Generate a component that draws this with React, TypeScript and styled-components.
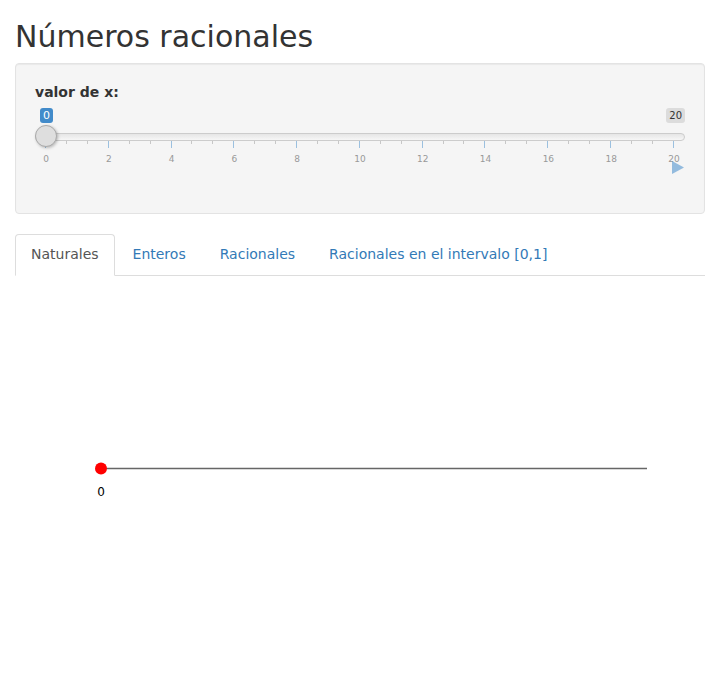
import React from "react";
import styled, { createGlobalStyle } from "styled-components";

const Global = createGlobalStyle`
  * { box-sizing: border-box; }
  html, body { margin: 0; padding: 0; background: #fff; }
  body {
    font-family: "DejaVu Sans", sans-serif;
    font-size: 14px;
    line-height: 1.42857;
    color: #333;
  }
`;

const Page = styled.div`
  padding: 0 15px;
`;

const Title = styled.h2`
  margin: 20px 0 10px;
  font-size: 30px;
  font-weight: 500;
  line-height: 1.1;
  color: #333;
`;

const Well = styled.div`
  background: #f5f5f5;
  border: 1px solid #e3e3e3;
  border-radius: 4px;
  box-shadow: inset 0 1px 1px rgba(0, 0, 0, 0.05);
  padding: 19px;
  margin-bottom: 20px;
`;

const FormGroup = styled.div`
  margin-bottom: 15px;
`;

const Label = styled.label`
  display: inline-block;
  font-weight: bold;
  margin-bottom: 5px;
  line-height: 19px;
  height: 20px;
`;

const Irs = styled.div`
  display: flex;
  flex-direction: column;
  height: 55px;
  & > * { flex-shrink: 0; }
`;

const TagRow = styled.div`
  display: flex;
  justify-content: space-between;
  align-items: flex-start;
  height: 15px;
  padding-left: 5px;
`;

const Tag = styled.span<{ $single?: boolean }>`
  padding: 1px 3px;
  font-size: ${(p) => (p.$single ? "11px" : "10px")};
  line-height: 13px;
  border-radius: 3px;
  color: ${(p) => (p.$single ? "#fff" : "#333")};
  background: ${(p) => (p.$single ? "#428bca" : "rgba(0,0,0,0.1)")};
`;

const Track = styled.div`
  position: relative;
  margin-top: 2px;
  height: 22px;
  padding-top: 8px;
  z-index: 1;
`;

const Line = styled.div`
  height: 8px;
  border: 1px solid #ccc;
  border-radius: 16px;
  background: linear-gradient(to bottom, #ddd -50%, #fff 150%);
`;

const Handle = styled.div`
  position: absolute;
  top: 0;
  left: 0;
  width: 22px;
  height: 22px;
  border: 1px solid #aaa;
  border-radius: 27px;
  background: #dedede;
  box-shadow: 1px 1px 3px rgba(0, 0, 0, 0.25);
`;

const TickRow = styled.div`
  display: flex;
  justify-content: space-between;
  align-items: flex-start;
  margin-top: -7px;
  height: 8px;
  padding: 0 11px 0 10px;
`;

const Tick = styled.span<{ $major?: boolean }>`
  width: 1px;
  height: ${(p) => (p.$major ? "8px" : "4px")};
  background: ${(p) => (p.$major ? "#428bca" : "#999")};
  opacity: 0.5;
`;

const LabelRow = styled.div`
  display: flex;
  justify-content: space-between;
  margin: 5px -4px 0;
`;

const GridText = styled.span`
  width: 30px;
  text-align: center;
  font-size: 9px;
  line-height: 12px;
  color: #999;
`;

const Animate = styled.div`
  display: flex;
  justify-content: flex-end;
  align-items: flex-start;
  margin-top: -9px;
  height: 25px;
  padding-top: 7px;
  padding-right: 1px;
`;

const Tabs = styled.ul`
  display: flex;
  list-style: none;
  margin: 0;
  padding: 0;
  border-bottom: 1px solid #ddd;
`;

const TabItem = styled.li`
  margin-right: 2px;
  margin-bottom: -1px;
`;

const TabLink = styled.a<{ $active?: boolean }>`
  display: block;
  padding: 9px 15px 11px;
  line-height: 20px;
  border: 1px solid ${(p) => (p.$active ? "#ddd" : "transparent")};
  border-bottom-color: transparent;
  border-radius: 4px 4px 0 0;
  background: ${(p) => (p.$active ? "#fff" : "transparent")};
  color: ${(p) => (p.$active ? "#555" : "#337ab7")};
  text-decoration: none;
  cursor: pointer;
`;

const Plot = styled.div`
  height: 400px;
`;

const majors = [0, 2, 4, 6, 8, 10, 12, 14, 16, 18, 20];
const ticks: boolean[] = [];
for (let i = 0; i <= 30; i++) ticks.push(i % 3 === 0);

const tabs = ["Naturales", "Enteros", "Racionales", "Racionales en el intervalo [0,1]"];

export default function App() {
  return (
    <>
      <Global />
      <Page>
        <Title>Números racionales</Title>
        <Well>
          <FormGroup>
            <Label>valor de x:</Label>
            <Irs>
              <TagRow>
                <Tag $single>0</Tag>
                <Tag>20</Tag>
              </TagRow>
              <Track>
                <Line />
                <Handle />
              </Track>
              <TickRow>
                {ticks.map((m, i) => (
                  <Tick key={i} $major={m} />
                ))}
              </TickRow>
              <LabelRow>
                {majors.map((v) => (
                  <GridText key={v}>{v}</GridText>
                ))}
              </LabelRow>
            </Irs>
            <Animate>
              <svg width="12" height="13" viewBox="0 0 12 13">
                <polygon points="0,0 12,6.5 0,13" fill="#428bca" opacity="0.55" />
              </svg>
            </Animate>
          </FormGroup>
        </Well>
        <Tabs>
          {tabs.map((t, i) => (
            <TabItem key={t}>
              <TabLink $active={i === 0}>{t}</TabLink>
            </TabItem>
          ))}
        </Tabs>
        <Plot>
          <svg width="100%" height="400">
            <line x1="86" y1="192.5" x2="632" y2="192.5" stroke="#666" strokeWidth="1.6" />
            <circle cx="86" cy="192.5" r="6" fill="#ff0000" />
            <text
              x="86"
              y="220"
              textAnchor="middle"
              fontSize="12"
              fontFamily="DejaVu Sans, sans-serif"
              fill="#000"
            >
              0
            </text>
          </svg>
        </Plot>
      </Page>
    </>
  );
}
